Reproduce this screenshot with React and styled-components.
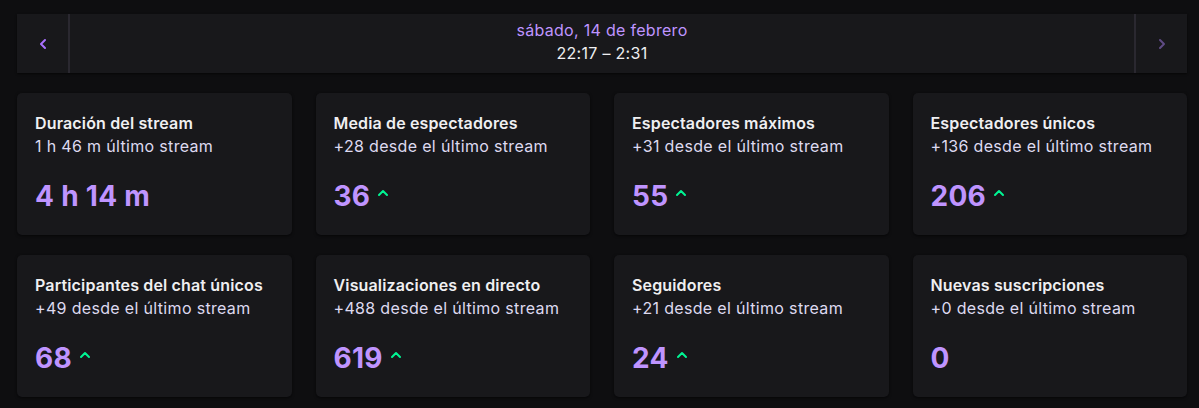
import React from "react";
import styled, { createGlobalStyle } from "styled-components";

const GlobalStyle = createGlobalStyle`
  html, body {
    margin: 0;
    background: #0e0e10;
    font-family: Inter, "Noto Sans", sans-serif;
  }
`;

const stats = [
  { title: "Duración del stream", sub: "1 h 46 m último stream", value: "4 h 14 m", up: false },
  { title: "Media de espectadores", sub: "+28 desde el último stream", value: "36", up: true },
  { title: "Espectadores máximos", sub: "+31 desde el último stream", value: "55", up: true },
  { title: "Espectadores únicos", sub: "+136 desde el último stream", value: "206", up: true },
  { title: "Participantes del chat únicos", sub: "+49 desde el último stream", value: "68", up: true },
  { title: "Visualizaciones en directo", sub: "+488 desde el último stream", value: "619", up: true },
  { title: "Seguidores", sub: "+21 desde el último stream", value: "24", up: true },
  { title: "Nuevas suscripciones", sub: "+0 desde el último stream", value: "0", up: false },
];

const Chevron = ({ dir }) => (
  <svg width="8" height="12" viewBox="0 0 8 12" fill="none">
    <path
      d={dir === "left" ? "M6 2 L2 6 L6 10" : "M2 2 L6 6 L2 10"}
      stroke="currentColor"
      strokeWidth="2"
      strokeLinecap="round"
      strokeLinejoin="round"
    />
  </svg>
);

const Caret = () => (
  <svg width="12" height="8" viewBox="0 0 12 8" fill="none">
    <path d="M2 6 L6 2 L10 6" stroke="currentColor" strokeWidth="2" strokeLinecap="round" strokeLinejoin="round" />
  </svg>
);

const App = () => {
  return (
    <Page>
      <GlobalStyle />
      <DateBar>
        <NavButton $side="left">
          <Chevron dir="left" />
        </NavButton>
        <DateInfo>
          <DateLine>sábado, 14 de febrero</DateLine>
          <TimeLine>22:17 – 2:31</TimeLine>
        </DateInfo>
        <NavButton $side="right" $disabled>
          <Chevron dir="right" />
        </NavButton>
      </DateBar>

      <Grid>
        {stats.map((s) => (
          <Card key={s.title}>
            <Title>{s.title}</Title>
            <Sub>{s.sub}</Sub>
            <ValueRow>
              <Value>{s.value}</Value>
              {s.up && (
                <Up>
                  <Caret />
                </Up>
              )}
            </ValueRow>
          </Card>
        ))}
      </Grid>
    </Page>
  );
};

export default App;

const Page = styled.div`
  padding: 14px 12px 11px 17px;
`;

const DateBar = styled.div`
  display: flex;
  height: 59px;
  background: #18181b;
  box-shadow: 0 1px 2px rgba(0, 0, 0, 0.6);
`;

const NavButton = styled.div`
  width: 51px;
  display: flex;
  align-items: center;
  justify-content: center;
  color: ${(p) => (p.$disabled ? "#5f4b85" : "#a970ff")};
  border-${(p) => (p.$side === "left" ? "right" : "left")}: 2px solid #2a2830;
`;

const DateInfo = styled.div`
  flex: 1;
  display: flex;
  flex-direction: column;
  align-items: center;
  justify-content: center;
  padding-bottom: 4px;
  font-size: 16px;
  letter-spacing: 0.3px;
  line-height: 23px;
`;

const DateLine = styled.div`
  color: #bf94ff;
`;

const TimeLine = styled.div`
  color: #efeff1;
`;

const Grid = styled.div`
  margin-top: 20px;
  display: grid;
  grid-template-columns: repeat(4, 1fr);
  column-gap: 24px;
  row-gap: 20px;
`;

const Card = styled.div`
  background: #18181b;
  border-radius: 5px;
  padding: 20px 18px 23px;
  box-shadow: 0 1px 3px rgba(0, 0, 0, 0.6);
`;

const Title = styled.div`
  color: #efeff1;
  font-size: 16px;
  font-weight: 600;
  letter-spacing: 0.15px;
  line-height: 20px;
`;

const Sub = styled.div`
  margin-top: 3px;
  color: #dedaf0;
  font-size: 16px;
  letter-spacing: 0.33px;
  line-height: 20px;
`;

const ValueRow = styled.div`
  margin-top: 24px;
  display: flex;
  align-items: center;
  gap: 7px;
  height: 32px;
`;

const Value = styled.div`
  color: #bf94ff;
  font-size: 28px;
  font-weight: 700;
  letter-spacing: 0.3px;
  line-height: 32px;
`;

const Up = styled.span`
  display: flex;
  color: #00f593;
  margin-top: -6px;
`;
